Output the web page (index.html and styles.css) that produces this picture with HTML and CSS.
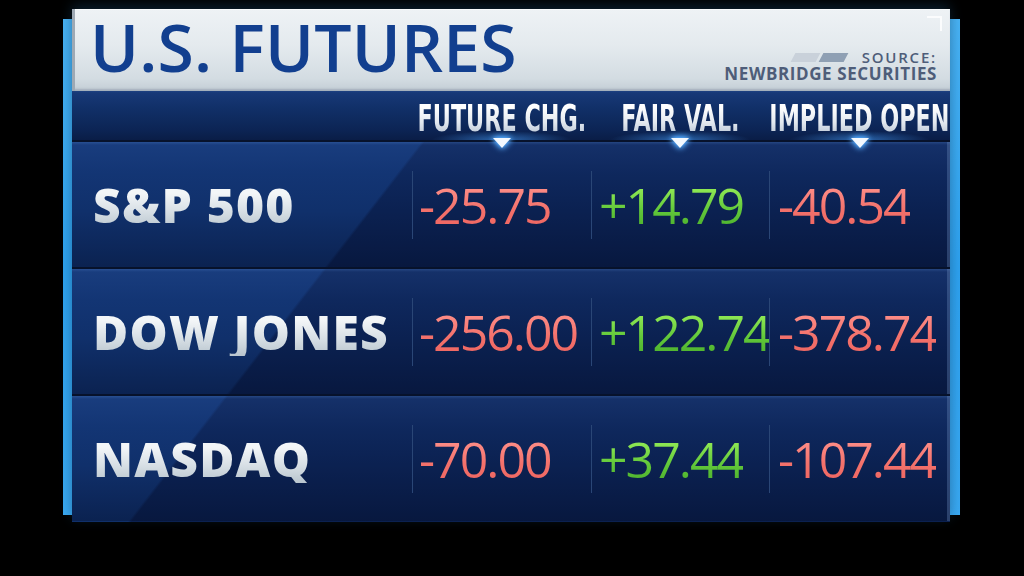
FILE: index.html
```html
<!DOCTYPE html>
<html lang="en">
<head>
<meta charset="utf-8">
<title>U.S. Futures</title>
<link rel="stylesheet" href="styles.css">
</head>
<body>
<div class="frame">
  <div class="panel">
    <header class="head">
      <h1 class="title">U.S. FUTURES</h1>
      <div class="source">
        <div class="src-top"><span class="logo"><i class="s1"></i><i class="s2"></i></span>SOURCE:</div>
        <div class="src-name">NEWBRIDGE SECURITIES</div>
      </div>
      <span class="corner"></span>
    </header>
    <div class="cols">
      <div class="colh-empty"></div>
      <div class="colh"><span class="colh-text">FUTURE CHG.</span></div>
      <div class="colh"><span class="colh-text">FAIR VAL.</span></div>
      <div class="colh"><span class="colh-text">IMPLIED OPEN</span></div>
    </div>
    <div class="rows">
      <div class="row">
        <div class="name"><span class="name-text">S&amp;P 500</span></div>
        <div class="cell c1"><div class="box"><span class="val neg">-25.75</span></div></div>
        <div class="cell c2"><div class="box"><span class="val pos">+14.79</span></div></div>
        <div class="cell c3"><div class="box"><span class="val neg">-40.54</span></div></div>
      </div>
      <div class="row">
        <div class="name"><span class="name-text">DOW JONES</span></div>
        <div class="cell c1"><div class="box"><span class="val neg">-256.00</span></div></div>
        <div class="cell c2"><div class="box"><span class="val pos">+122.74</span></div></div>
        <div class="cell c3"><div class="box"><span class="val neg">-378.74</span></div></div>
      </div>
      <div class="row">
        <div class="name"><span class="name-text">NASDAQ</span></div>
        <div class="cell c1"><div class="box"><span class="val neg">-70.00</span></div></div>
        <div class="cell c2"><div class="box"><span class="val pos">+37.44</span></div></div>
        <div class="cell c3"><div class="box"><span class="val neg">-107.44</span></div></div>
      </div>
    </div>
  </div>
</div>
</body>
</html>
```

FILE: styles.css
```css
html, body {
  margin: 0;
  padding: 0;
}
body {
  background: #000;
  width: 1024px;
  height: 576px;
  overflow: hidden;
  font-family: "Open Sans", "Liberation Sans", sans-serif;
}

/* blue side stripes behind the panel */
.frame {
  margin: 19px 0 0 63px;
  width: 897px;
  height: 496px;
  box-sizing: border-box;
  padding: 0 10px 0 9px;
  display: flex;
  flex-direction: column;
  background: linear-gradient(#4ab4f6, #2ea3f1 50%, #3aaaf4);
}

.panel {
  margin-top: -10px;
  height: 513px;
  flex: none;
  display: flex;
  flex-direction: column;
  box-shadow: 0 -4px 12px rgba(20, 60, 90, 0.5);
}

/* light header */
.head {
  position: relative;
  flex: none;
  height: 82px;
  box-sizing: border-box;
  display: flex;
  justify-content: space-between;
  align-items: flex-start;
  padding: 0 13px 0 18px;
  background: linear-gradient(#eef2f5 0%, #e4eaee 45%, #d3dce2 85%, #c3cdd5 100%);
  box-shadow: inset 3px 0 0 #9ea9b4, inset 0 -3px 2px -1px #a3aebb, inset 0 1px 0 #f8fafb;
}
.title {
  margin: 4px 0 0 0;
  font-family: "Open Sans", sans-serif;
  font-weight: 600;
  font-size: 66px;
  line-height: 1;
  color: #123f8f;
  letter-spacing: 0.2px;
}
.source {
  padding-top: 39px;
  text-align: right;
  font-family: "Open Sans", sans-serif;
  color: #4e5d79;
}
.src-top {
  font-size: 15px;
  line-height: 18px;
  font-weight: 600;
  letter-spacing: 1.8px;
  display: flex;
  justify-content: flex-end;
  align-items: center;
}
.src-name {
  font-size: 17px;
  line-height: 16px;
  font-weight: 700;
  letter-spacing: 0.6px;
}
.logo {
  display: inline-flex;
  gap: 3px;
  margin-right: 16px;
  margin-top: 1px;
}
.logo i {
  display: block;
  width: 25px;
  height: 9px;
  transform: skewX(-28deg);
}
.logo .s1 { background: #c9d1da; }
.logo .s2 { background: #8fa0b4; }
.corner {
  position: absolute;
  top: 7px;
  right: 8px;
  width: 13px;
  height: 13px;
  border-top: 2px solid #fbfcfd;
  border-right: 2px solid #fbfcfd;
}

/* column headers */
.cols {
  flex: none;
  height: 49px;
  display: grid;
  grid-template-columns: 340px 179px 178px 181px;
  background: linear-gradient(#1e4182 0, #173877 2px, #113068 35%, #0c2454 80%, #0a1d46 100%);
}
.colh {
  position: relative;
  display: flex;
  justify-content: center;
  align-items: flex-start;
  padding-top: 9px;
  background: radial-gradient(ellipse 70px 9px at 50% 100%, rgba(70, 160, 255, 0.55), rgba(70, 160, 255, 0));
}
.colh-text {
  display: inline-block;
  font-family: "Liberation Sans Narrow", "DejaVu Sans Condensed", sans-serif;
  font-weight: 700;
  font-size: 37px;
  line-height: 1;
  transform: scaleX(0.67);
  background: linear-gradient(#ffffff 20%, #e3e9f0 60%, #b3c0d0 100%);
  -webkit-background-clip: text;
  background-clip: text;
  color: transparent;
  white-space: nowrap;
}
.colh::after {
  content: "";
  position: absolute;
  top: 47px;
  left: 50%;
  margin-left: -9px;
  width: 0;
  height: 0;
  border-left: 9px solid transparent;
  border-right: 9px solid transparent;
  border-top: 10px solid #f4f9ff;
  filter: drop-shadow(0 0 3px #3d9dff) drop-shadow(0 0 2px #6ab8ff);
  z-index: 2;
}

/* rows */
.rows {
  flex: 1;
  display: flex;
  flex-direction: column;
  background: linear-gradient(127.7deg, #10306b 29.9%, #0b2151 30.2%);
}
.row {
  height: 125px;
  flex: none;
  border-top: 2px solid #07122b;
  display: grid;
  grid-template-columns: 340px 179px 178px 181px;
  background: linear-gradient(rgba(80, 130, 210, 0.38) 0, rgba(60, 110, 200, 0.2) 3px, rgba(40, 90, 180, 0.12) 25%, rgba(20, 50, 120, 0.0) 55%, rgba(0, 5, 25, 0.32) 100%);
  box-shadow: inset -3px 0 0 rgba(110, 140, 190, 0.35);
}
.name {
  display: flex;
  align-items: center;
  padding-left: 21px;
}
.name-text {
  font-family: "Open Sans", sans-serif;
  font-weight: 800;
  font-size: 48px;
  line-height: 1;
  letter-spacing: 1.2px;
  background: linear-gradient(#f3f6f8 25%, #d6dee4 65%, #b9c5ce 100%);
  -webkit-background-clip: text;
  background-clip: text;
  color: transparent;
  white-space: nowrap;
}
.cell {
  display: flex;
  align-items: center;
}
.box {
  height: 68px;
  border-left: 1px solid #2a4676;
  display: flex;
  align-items: center;
  padding-left: 6px;
}
.c2 .box { padding-left: 7px; }
.c3 .box { padding-left: 8px; }
.val {
  font-family: "Open Sans", sans-serif;
  font-weight: 500;
  font-size: 50px;
  line-height: 1;
  letter-spacing: -2px;
  -webkit-background-clip: text;
  background-clip: text;
  color: transparent;
  white-space: nowrap;
}
.neg {
  background-image: linear-gradient(#fc8a84 20%, #f3716b 60%, #ee6561 100%);
}
.pos {
  background-image: linear-gradient(#8ce652 20%, #62c83a 60%, #4aae2c 100%);
}
```
